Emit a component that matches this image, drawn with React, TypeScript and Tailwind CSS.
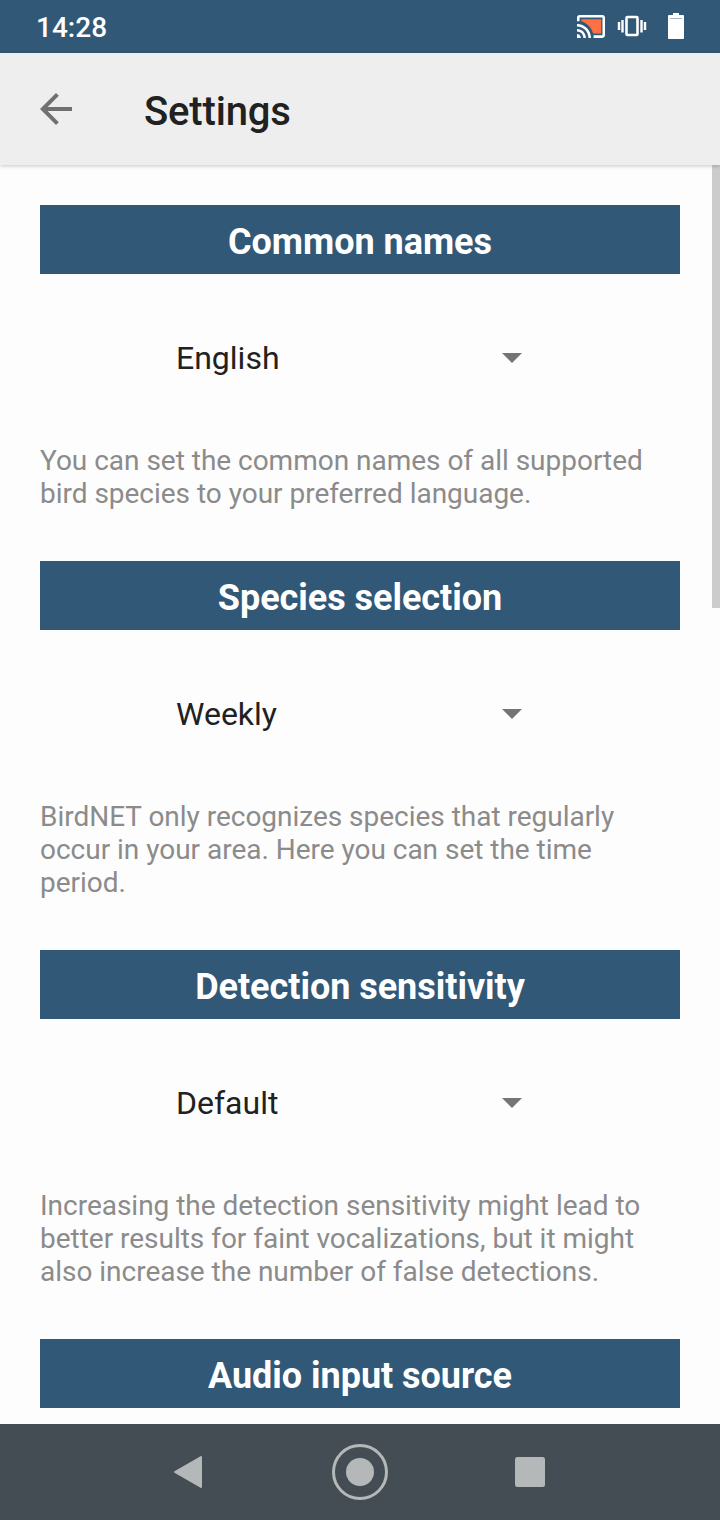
import React from 'react';

type Section = { title: string; value: string; lines: string[] };

const sections: Section[] = [
  { title: 'Common names', value: 'English', lines: ['You can set the common names of all supported', 'bird species to your preferred language.'] },
  { title: 'Species selection', value: 'Weekly', lines: ['BirdNET only recognizes species that regularly', 'occur in your area. Here you can set the time', 'period.'] },
  { title: 'Detection sensitivity', value: 'Default', lines: ['Increasing the detection sensitivity might lead to', 'better results for faint vocalizations, but it might', 'also increase the number of false detections.'] },
];

function Title({ children }: { children: React.ReactNode }) {
  return (
    <h2 className="flex h-[69px] items-center justify-center bg-[#325877] pt-1 text-[36px] leading-[42px] font-bold tracking-[-0.03px] whitespace-nowrap text-white">
      {children}
    </h2>
  );
}

export default function App() {
  return (
    <div className="flex h-[1520px] w-[720px] flex-col overflow-hidden bg-[#fdfdfd] font-[Roboto,sans-serif]">
      <div className="flex h-[53px] shrink-0 items-center bg-[#325877] pl-9 text-white">
        <span className="pt-[2px] text-[28px] font-medium">14:28</span>
        <svg className="ml-auto" width="143" height="53" viewBox="577 0 143 53">
          <path d="M581.300 19.300H601.200V33.500H593.200C591.500 27.500 587.500 23.200 581.300 21.200Z" fill="#ff7043" />
          <path
            transform="translate(575.73 11.18) scale(1.273)"
            d="M21 3H3c-1.1 0-2 .9-2 2v3h2V5h18v14h-7v2h7c1.1 0 2-.9 2-2V5c0-1.1-.9-2-2-2zM1 18v3h3c0-1.66-1.34-3-3-3zm0-4v2c2.76 0 5 2.24 5 5h2c0-3.87-3.13-7-7-7zm0-4v2c4.97 0 9 4.03 9 9h2c0-6.08-4.93-11-11-11z"
            fill="white"
          />
          <rect x="626.500" y="17" width="11" height="18" rx="1" fill="none" stroke="white" strokeWidth="2.6" />
          <path d="M622.500 20v12.500M619 22v8M641.500 20v12.500M645 22v8" stroke="white" strokeWidth="2.4" />
          <path d="M673 13h6v2h4q1 0 1 1v22q0 1-1 1h-14q-1 0-1-1V16q0-1 1-1h4Z" fill="white" />
          <path d="M670 18.500h12" stroke="#325877" strokeOpacity="0.45" strokeWidth="1" />
        </svg>
      </div>
      <header className="z-10 flex h-28 shrink-0 items-center bg-[#eeeeee] pl-10 shadow-[0_1px_4px_rgba(0,0,0,0.22)]">
        <svg width="32" height="32" viewBox="0 0 24 24">
          <path transform="translate(-6 -6) scale(1.5)" d="M20 11H7.83l5.59-5.59L12 4l-8 8 8 8 1.41-1.41L7.830 13H20v-2z" fill="#707070" />
        </svg>
        <h1 className="pt-[5px] pl-[72px] text-[40px] font-medium tracking-[-0.15px] text-[#212121]">Settings</h1>
      </header>
      <div className="flex min-h-0 flex-1">
        <main className="flex w-[712px] shrink-0 flex-col pt-10 pr-8 pl-10">
          {sections.map((s) => (
            <section key={s.title} className="mb-[51px]">
              <Title>{s.title}</Title>
              <div className="mb-[2px] flex h-[168px] items-center pr-[158px] pl-[136px] text-[32px] text-[#212121]">
                <span>{s.value}</span>
                <svg className="ml-auto" width="20" height="10" viewBox="0 0 20 10">
                  <path d="M0 0h20L10 10Z" fill="#757575" />
                </svg>
              </div>
              <p className="text-[28px] leading-[33px] tracking-[-0.02px] whitespace-nowrap text-[#8b8b8b]">
                {s.lines.map((l) => (
                  <span key={l} className="block">{l}</span>
                ))}
              </p>
            </section>
          ))}
          <Title>Audio input source</Title>
        </main>
        <div className="h-[443px] w-2 bg-[#cccccc]" />
      </div>
      <nav className="flex h-24 shrink-0 items-center justify-center bg-[#444d53]">
        <svg width="720" height="96" viewBox="0 0 720 96">
          <path d="M201 33v30L175 48Z" fill="#b4b8b9" stroke="#b4b8b9" strokeWidth="2" strokeLinejoin="round" />
          <circle cx="360" cy="48" r="26.500" fill="none" stroke="#b4b8b9" strokeWidth="3" />
          <circle cx="360" cy="48" r="14" fill="#b4b8b9" />
          <rect x="515" y="33" width="30" height="30" rx="2.500" fill="#b4b8b9" />
        </svg>
      </nav>
    </div>
  );
}
